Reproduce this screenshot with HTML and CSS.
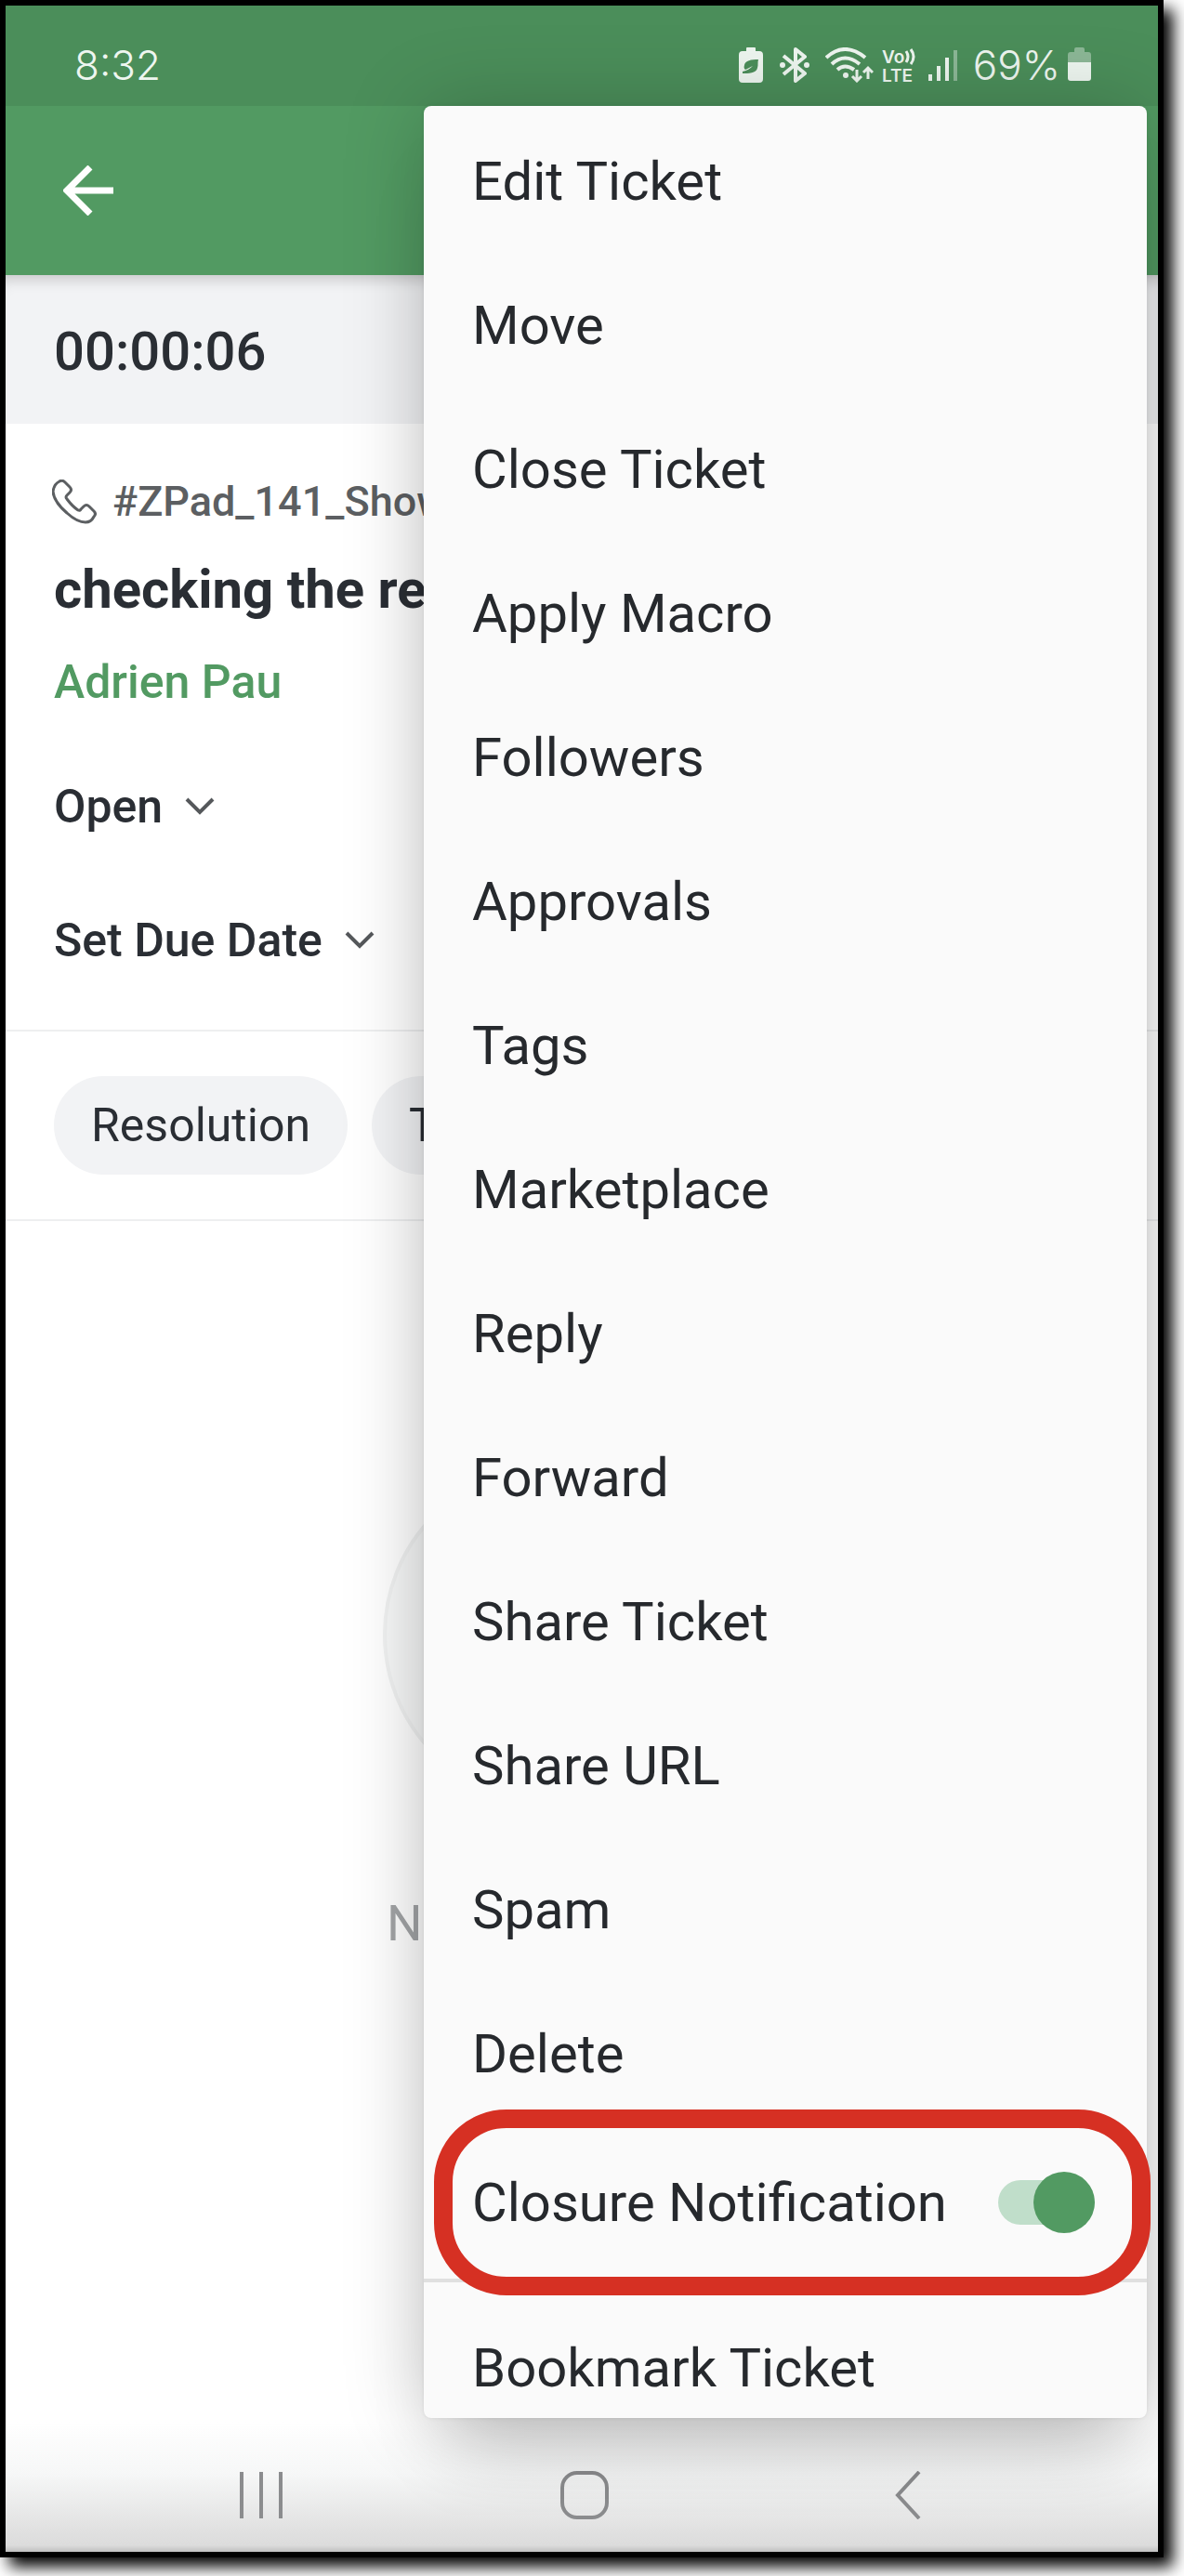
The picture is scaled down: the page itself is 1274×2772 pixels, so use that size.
FILE: index.html
```html
<!DOCTYPE html>
<html lang="en">
<head>
<meta charset="utf-8">
<meta name="viewport" content="width=device-width, initial-scale=1">
<title>Ticket</title>
<link rel="stylesheet" href="styles.css">
</head>
<body>
<div class="phone">
  <div class="status">
    <span class="clock">8:32</span>
    <div class="status-icons">
      <svg width="26" height="38" viewBox="0 0 26 38"><path fill="#eef6f0" fill-rule="evenodd" d="M8 1q0-1 1-1h8q1 0 1 1v3h4q4 0 4 4v26q0 4-4 4H4q-4 0-4-4V8q0-4 4-4h4zM21 13c-8 0-14 1-15 6-1 3 0 4 1 5 3-1 5-3 8-4-3 3-6 5-11 6v2c6 0 15 0 16-6 1-3 0-6 1-9z"/></svg>
      <svg class="bt" width="32" height="38" viewBox="0 0 32 38" fill="none" stroke="#eef6f0" stroke-width="4"><path d="M4 9l23 19-10 8V2l10 8L4 29" stroke-linejoin="round"/><circle cx="3" cy="19" r="3" fill="#eef6f0" stroke="none"/><circle cx="29" cy="19" r="3" fill="#eef6f0" stroke="none"/></svg>
      <svg class="wifi" width="52" height="38" viewBox="0 0 52 38" fill="none" stroke="#eef6f0" stroke-width="4"><path d="M1 11q20-18 42 0M7 18q14-13 30 0M13 24q8-7 18 0"/><circle cx="22" cy="30" r="3" fill="#eef6f0" stroke="none"/><path d="M34 24v11M29 31l5 5 5-5M46 34V22M41 27l5-5 5 5" stroke-width="3"/></svg>
      <svg class="volte" width="40" height="38" viewBox="0 0 40 38"><text x="0" y="17" class="tiny">Vo</text><text x="0" y="37" class="tiny">LTE</text><path d="M26 4q4 6 0 12M31 2q6 8 0 16" fill="none" stroke="#eef6f0" stroke-width="3"/></svg>
      <svg class="signal" width="32" height="38" viewBox="0 0 32 38" fill="#eef6f0"><path d="M0 29h4v7H0zM9 20h4v16H9zM18 11h4v25h-4z"/><path d="M27 3h4v33h-4z" opacity=".4"/></svg>
      <span class="percent">69%</span>
      <svg width="25" height="38" viewBox="0 0 25 38" fill="#eef6f0"><path d="M0 16V8q0-3 3-3h4V2q0-2 2-2h7q2 0 2 2v3h4q3 0 3 3v8z" opacity=".4"/><path d="M0 16h25v17q0 3-3 3H3q-3 0-3-3z"/></svg>
    </div>
  </div>
  <header class="appbar">
    <button class="back" type="button" aria-label="Back"><svg width="54" height="54" viewBox="0 0 54 54" fill="none" stroke="#fff" stroke-width="7"><path d="M54 27H6M29 2L4 27l25 25"/></svg></button>
  </header>
  <div class="timer">00:00:06</div>
  <main class="ticket">
    <div class="ticket-id">
      <svg width="48" height="48" viewBox="0 0 48 48" fill="none" stroke="#5c5f62" stroke-width="3" stroke-linejoin="round"><path d="M8 2q3-2 6 1l5 5q3 3 0 6l-3 3q-2 2 0 4 6 8 12 12 2 1 3-1l3-3q3-3 6 0l5 5q3 3 0 6-3 6-9 6-9 0-20-10Q2 24 1 13 2 5 8 2z"/></svg>
      <span>#ZPad_141_Show</span>
    </div>
    <h1 class="subject">checking the re</h1>
    <a class="contact" href="#">Adrien Pau</a>
    <button class="field" type="button">Open<svg width="32" height="20" viewBox="0 0 32 20" fill="none" stroke="#55585b" stroke-width="4"><path d="M2 2l14 14L30 2"/></svg></button>
    <button class="field" type="button">Set Due Date<svg width="32" height="20" viewBox="0 0 32 20" fill="none" stroke="#55585b" stroke-width="4"><path d="M2 2l14 14L30 2"/></svg></button>
  </main>
  <div class="chips">
    <button class="chip" type="button">Resolution</button>
    <button class="chip" type="button">T</button>
  </div>
  <div class="empty">
    <div class="disc"></div>
    <p class="empty-text">N</p>
  </div>
  <nav class="navbar">
    <button type="button" aria-label="Recents"><svg width="46" height="52" viewBox="0 0 46 52" stroke="#8b8c8e" stroke-width="4"><path d="M2 1v50M23 1v50M44 1v50"/></svg></button>
    <button type="button" aria-label="Home"><svg width="52" height="52" viewBox="0 0 52 52" fill="none" stroke="#8b8c8e" stroke-width="4"><rect x="2" y="2" width="48" height="48" rx="16"/></svg></button>
    <button type="button" aria-label="Back"><svg width="28" height="52" viewBox="0 0 28 52" fill="none" stroke="#8b8c8e" stroke-width="4"><path d="M26 1L3 26l23 25"/></svg></button>
  </nav>
  <div class="menu-layer">
    <div class="menu">
      <button class="item" type="button">Edit Ticket</button>
      <button class="item" type="button">Move</button>
      <button class="item" type="button">Close Ticket</button>
      <button class="item" type="button">Apply Macro</button>
      <button class="item" type="button">Followers</button>
      <button class="item" type="button">Approvals</button>
      <button class="item" type="button">Tags</button>
      <button class="item" type="button">Marketplace</button>
      <button class="item" type="button">Reply</button>
      <button class="item" type="button">Forward</button>
      <button class="item" type="button">Share Ticket</button>
      <button class="item" type="button">Share URL</button>
      <button class="item" type="button">Spam</button>
      <button class="item" type="button">Delete</button>
      <label class="item toggle-item">Closure Notification<input class="switch" type="checkbox" checked></label>
      <button class="item last" type="button">Bookmark Ticket</button>
    </div>
  </div>
</div>
</body>
</html>
```
FILE: styles.css
```css
* { box-sizing: border-box; }

body {
  margin: 0;
  padding: 0 22px 20px 0;
  background: #fff;
  font-family: Roboto, "Liberation Sans", sans-serif;
  color: #2a2e34;
}

button {
  margin: 0;
  padding: 0;
  border: 0;
  background: none;
  color: inherit;
  font: inherit;
  text-align: left;
}

svg { display: block; flex: none; }

.phone {
  position: relative;
  display: flex;
  flex-direction: column;
  min-height: calc(100vh - 20px);
  border: 6px solid #000;
  background: #fff;
  box-shadow: 10px 10px 16px #000;
}

.status {
  display: flex;
  align-items: center;
  justify-content: space-between;
  height: 108px;
  padding: 20px 72px 0 74px;
  background: #4b8e5a;
  color: #eef6f0;
  font: 300 44px/52px Inter, sans-serif;
}
.status-icons { display: flex; align-items: center; }
.bt { margin-left: 18px; }
.wifi { margin-left: 17px; }
.volte { margin-left: 9px; overflow: visible; }
.signal { margin-left: 10px; }
.percent { margin: 0 8px 0 16px; }
.tiny { font: 600 19px Inter, sans-serif; fill: #eef6f0; }

.appbar {
  display: flex;
  align-items: center;
  height: 182px;
  padding-left: 62px;
  background: #529a62;
}

.timer {
  height: 160px;
  padding-left: 52px;
  background: #f2f3f5;
  box-shadow: inset 0 14px 16px -10px rgba(0, 0, 0, .2);
  font-size: 58px;
  font-weight: 500;
  line-height: 164px;
}

.ticket {
  display: flex;
  flex-direction: column;
  align-items: flex-start;
  padding: 54px 0 52px 52px;
  border-bottom: 2px solid #eeeff0;
}
.ticket-id {
  display: flex;
  align-items: center;
  gap: 17px;
  margin-left: -2px;
  color: #5c5f62;
  font-size: 45px;
  font-weight: 500;
  line-height: 60px;
}
.subject {
  margin: 26px 0 28px;
  font-size: 58px;
  font-weight: 700;
  line-height: 76px;
}
.contact {
  color: #529a62;
  font-size: 50px;
  font-weight: 500;
  line-height: 68px;
  text-decoration: none;
}
.field {
  display: flex;
  align-items: center;
  gap: 24px;
  margin-top: 56px;
  font-size: 50px;
  font-weight: 500;
  line-height: 88px;
}

.chips {
  display: flex;
  gap: 26px;
  padding: 48px 0;
  border-bottom: 2px solid #eeeff0;
  padding-left: 52px;
}
.chip {
  height: 106px;
  padding: 0 40px;
  border-radius: 53px;
  background: #f2f3f5;
  font-size: 50px;
}

.empty { flex: 1; padding: 262px 0 0 406px; }
.disc {
  width: 366px;
  height: 366px;
  border: 4px solid #f1f2f2;
  border-radius: 50%;
  background: #f7f8f8;
}
.empty-text {
  margin: 96px 0 0 4px;
  color: #a3a5a7;
  font-size: 54px;
  line-height: 64px;
}

.navbar {
  display: grid;
  grid-template-columns: repeat(3, 1fr);
  place-items: center;
  height: 140px;
  padding: 18px 95px 0 101px;
  background: linear-gradient(#fff 0%, #f6f7f7 40%, #e0e0e0 85%, #dcdcdc 95%, #c0c0c0 100%);
}

.menu-layer {
  position: absolute;
  inset: 0 0 40px 0;
  overflow: hidden;
  padding: 108px 12px 0 450px;
}
.menu {
  padding-top: 2px;
  border-radius: 8px;
  background: #fafafa;
  color: #26292d;
  font-size: 58px;
  box-shadow: 0 0 4px rgba(0, 0, 0, .08), 0 0 90px rgba(0, 0, 0, .2), 0 60px 80px -30px rgba(0, 0, 0, .18);
}
.item {
  display: flex;
  align-items: center;
  width: 100%;
  height: 155px;
  padding: 2px 0 0 52px;
}
.toggle-item {
  position: relative;
  justify-content: space-between;
  height: 170px;
  padding-right: 56px;
  border-bottom: 4px solid #e0e0e0;
}
.toggle-item::after {
  content: "";
  position: absolute;
  inset: -16px -4px -18px 11px;
  border: 20px solid #d63023;
  border-radius: 78px;
}
.switch {
  appearance: none;
  display: flex;
  align-items: center;
  justify-content: flex-end;
  width: 104px;
  height: 48px;
  margin: 0;
  border-radius: 24px;
  background: #c0deca;
}
.switch::before {
  content: "";
  flex: none;
  width: 66px;
  height: 66px;
  border-radius: 50%;
  background: #529a62;
}
.last { height: 146px; padding-top: 38px; }
```
